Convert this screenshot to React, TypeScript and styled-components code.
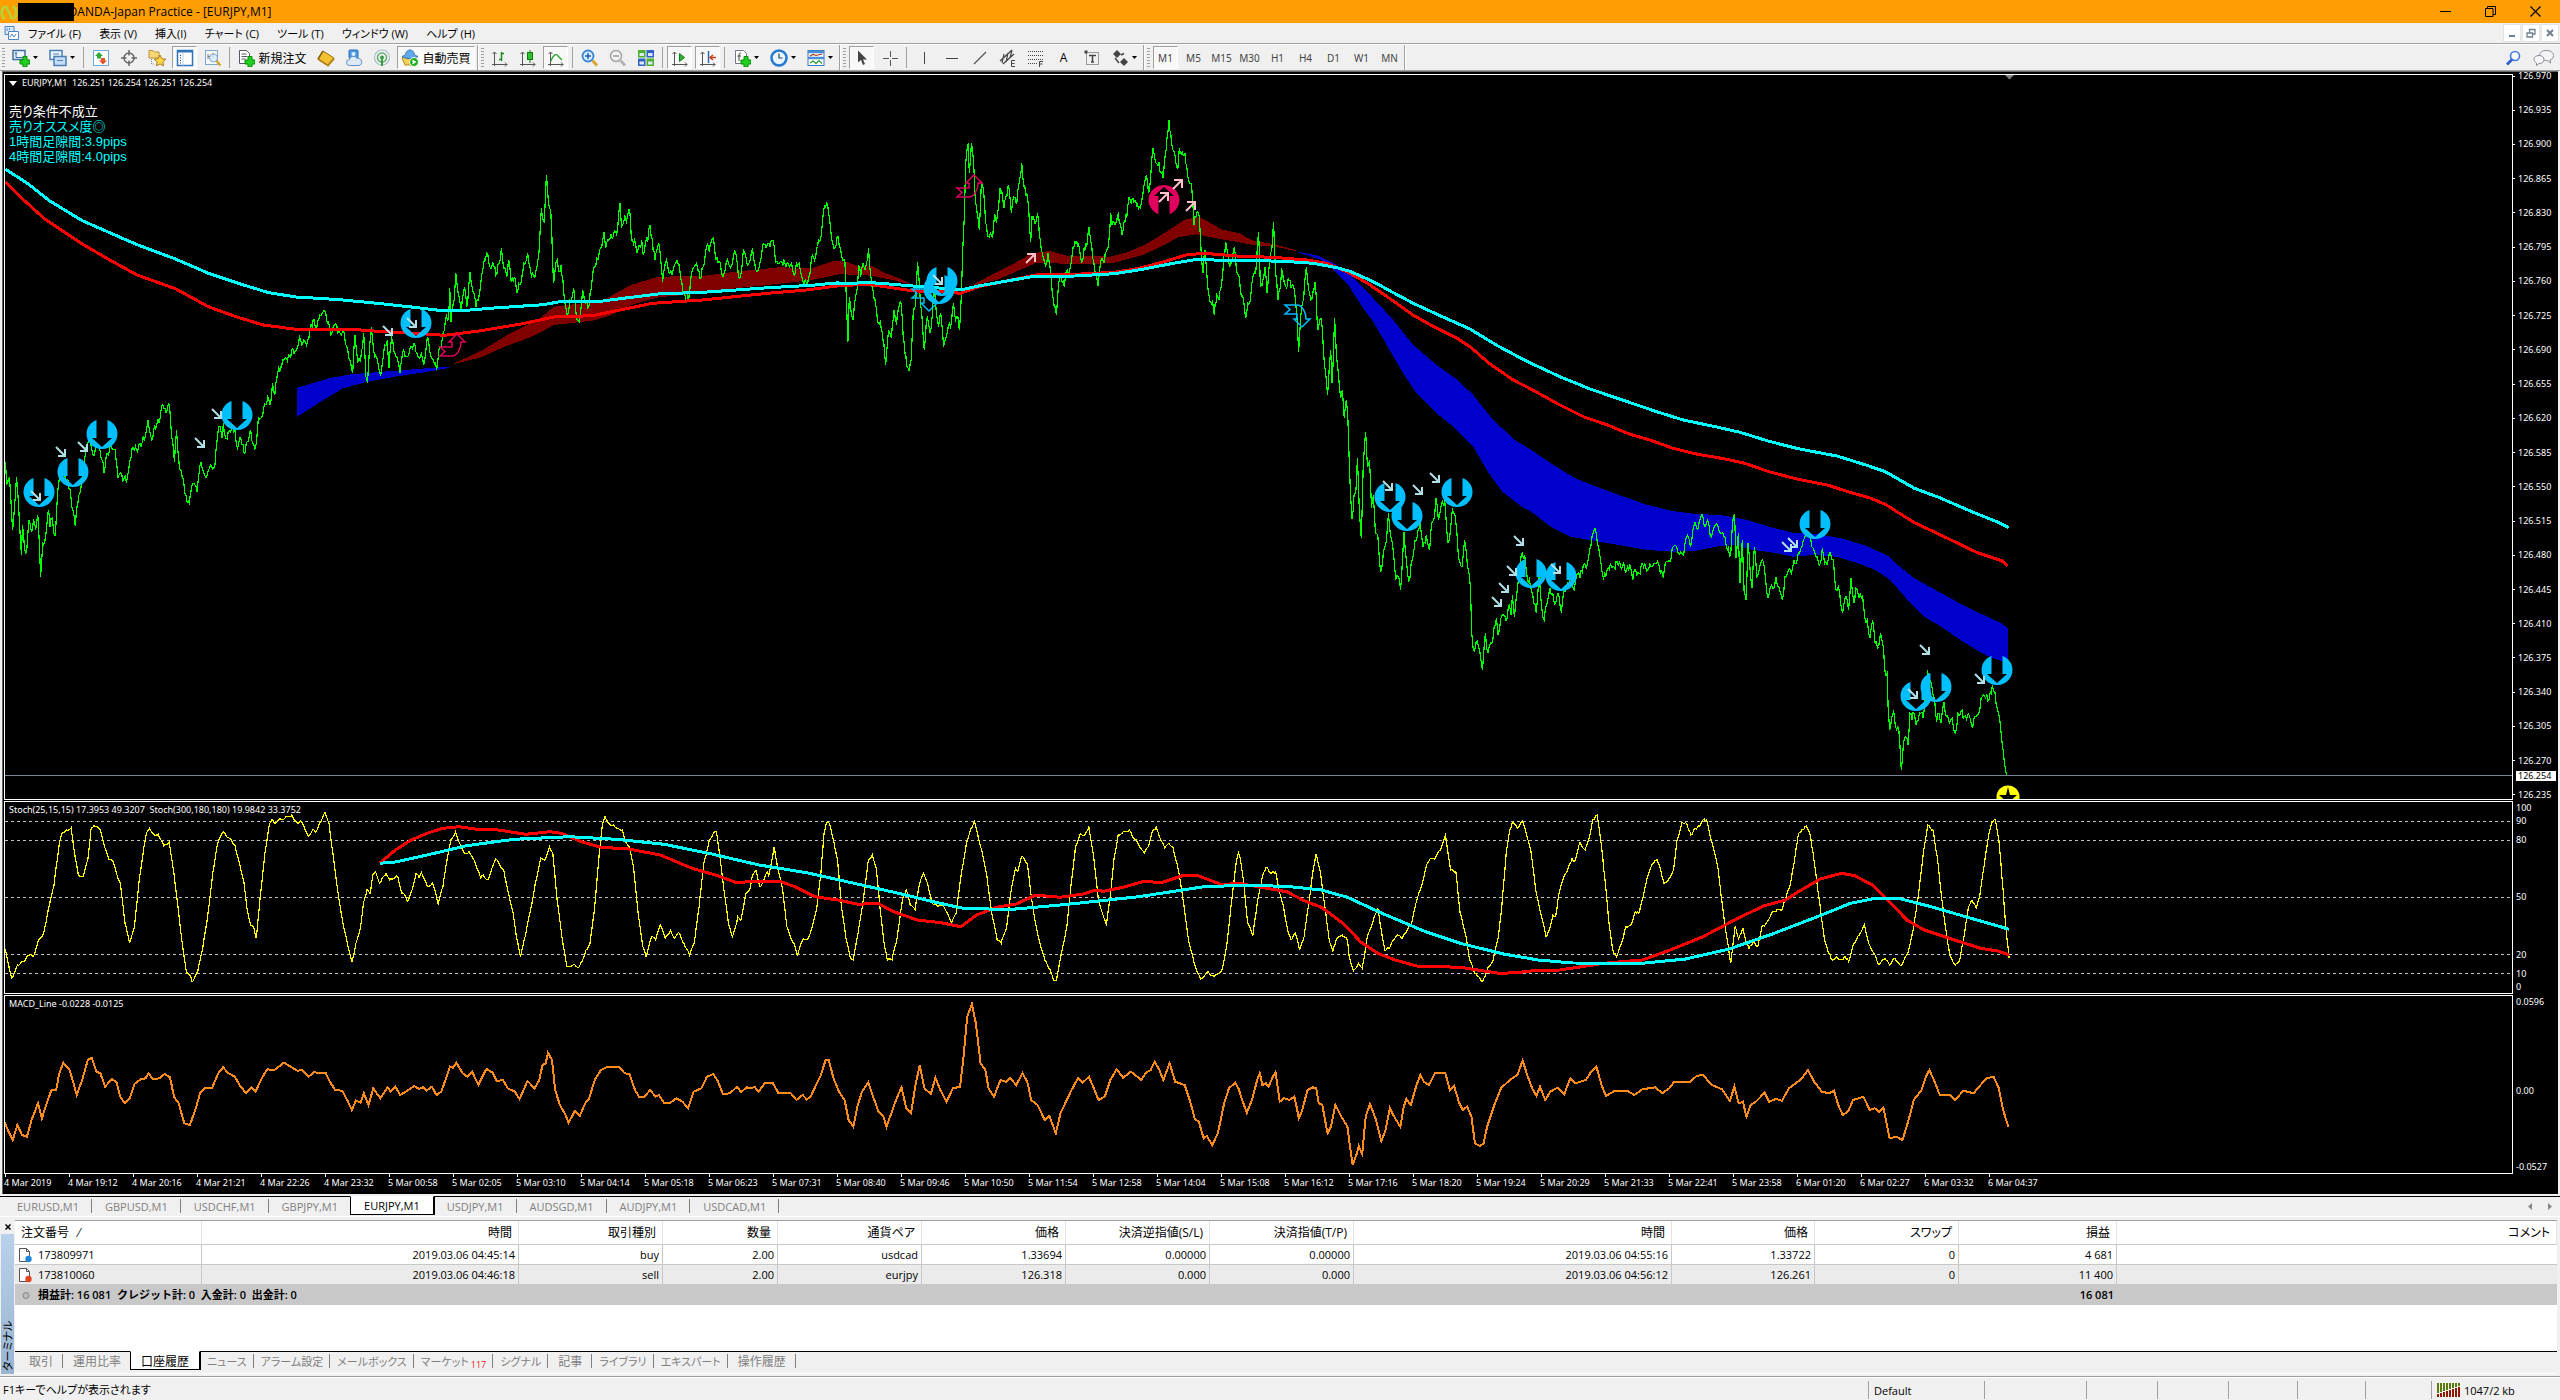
import React from "react";
import styled, { createGlobalStyle, css } from "styled-components";

const UI = `"Open Sans", "Noto Sans CJK JP", sans-serif`;
const CHART = `"Noto Sans", "Noto Sans CJK JP", sans-serif`;

const Global = createGlobalStyle`
  *, *::before, *::after { box-sizing: border-box; }
  html, body { margin: 0; height: 100%; }
  body { background: #f0f0f0; font-family: ${UI}; font-size: 11px; color: #000; overflow: hidden; }
  #root { height: 100%; }
  button { font: inherit; color: inherit; background: none; border: 0; padding: 0; margin: 0; cursor: default; }
  svg { display: block; flex: none; }
`;

/* ---------- series data ---------- */

type Pt = [number, number];

/* Turns a run of samples stored in grid units into chart coordinates. */
const run = (x0: number, y0: number, sx: number, sy: number, data: string): Pt[] =>
  data
    .trim()
    .split(/\s+/)
    .map((p) => {
      const [x, y] = p.split(",").map(Number);
      return [x0 + x / sx, y0 + y / sy] as Pt;
    });

const A = (d: string) => run(0, 160, 1.823, 3, d);
const B = (d: string) => run(800, 100, 2.8, 3, d);
const C = (d: string) => run(1240, 220, 3, 3, d);
const D = (d: string) => run(1260, 380, 2.063, 3, d);
const E = (d: string) => run(0, 780, 1.2645, 3, d);
const F = (d: string) => run(1200, 780, 1.153, 3, d);

const fmt = (pts: Pt[]) => pts.map(([x, y]) => `${x.toFixed(1)},${y.toFixed(1)}`).join(" ");
const band = (up: Pt[], low: Pt[]) => fmt([...up, ...[...low].reverse()]);

/* Fills the gaps between samples with one bar per pixel, each with a small swing. */
const perBar = (pts: Pt[], swing: number): Pt[] =>
  pts.flatMap((p, i) => {
    const next = pts[i + 1];
    if (!next) return [p];
    const steps = Math.max(1, Math.round(next[0] - p[0]));
    return Array.from({ length: steps }, (_, k): Pt => {
      const t = k / steps;
      const x = p[0] + (next[0] - p[0]) * t;
      const off = k === 0 ? 0 : Math.sin(x * 12.9 + i * 7.3) * swing;
      return [x, p[1] + (next[1] - p[1]) * t + off];
    });
  });

const price = fmt(
  perBar(
    [
      ...A(`10,905 12,975 17,950 23,1110 30,950 36,1100 39,1185 41,1095 45,1170 49,1165 53,1080 57,1115 61,1080 65,1110 69,1065 74,1250 78,1150 83,1130 88,1050 91,1100 95,1075 98,1120 101,1125 105,1000 110,950 116,940 122,960 128,990 133,1050 137,1098 142,1030 147,990 152,910 157,860 165,845 172,885 178,855 186,900 190,940 195,880 203,860 210,870 215,955 222,945 230,965 237,900 243,862 249,870 255,850 263,840 270,780 277,840 282,795 290,790 294,745 299,745 303,760 309,735 313,830 318,905 322,810 327,920 332,950 337,1000 345,1030 352,970 359,995 366,905 377,950 386,920 392,915 397,820 401,800 405,835 407,790 412,835 420,815 428,805 433,865 439,835 445,880 451,845 457,810 461,850 466,862 471,770 480,755 488,710 492,735 497,670 501,705 506,640 512,620 515,600 522,595 528,590 532,570 540,570 546,530 552,550 559,555 565,510 571,480 577,510 583,465 592,452 597,490 605,520 612,492 620,520 626,505 632,560 637,600 643,640 647,525 652,610 657,605 663,520 667,650 670,670 677,500 683,590 690,620 694,645 701,555 706,540 709,625 714,535 722,590 729,640 736,570 742,590 748,560 756,550 762,590 768,580 774,610 779,530 783,570 790,600 796,630 800,570 806,540 812,480 818,470 820,385 822,485 828,420 831,340 837,410 841,450 847,380 851,440 857,335 863,400 868,440 876,380 881,320 887,278 893,320 898,305 904,345 910,310 914,265 918,325 924,350 927,300 932,365 938,350 942,400 948,375 955,310 962,280 967,330 973,350 979,320 982,290 985,200 987,145 992,185 996,45 999,110 1004,150 1006,220 1009,370 1013,310 1016,300 1019,335 1023,315 1026,355 1030,430 1034,465 1039,420 1046,385 1050,460 1056,485 1062,390 1068,430 1074,435 1080,350 1084,320 1090,300 1095,265 1101,215 1104,265 1110,240 1118,230 1126,205 1130,130 1133,200 1139,165 1142,185 1148,150 1151,240 1157,240 1162,280 1170,240 1173,285 1178,240 1181,245 1185,195 1191,275 1194,300 1201,250 1208,365 1215,300 1221,340 1227,330 1236,310 1241,355 1246,400 1250,420 1256,415 1261,340 1270,310 1276,355 1282,320 1288,260 1293,275 1300,235 1305,300 1311,305 1317,350 1324,305 1330,320 1337,290 1341,275 1346,345 1350,350 1355,270 1361,305 1368,295 1372,265 1378,330 1384,320 1390,260 1397,265 1404,260 1409,240 1413,290 1418,310 1425,305 1431,310 1437,310 1443,310 1449,345 1452,305 1457,310 1464,365 1470,370 1476,350 1481,285 1487,290 1492,240 1497,225 1503,138 1509,140 1514,205 1520,265 1528,230 1534,285 1540,300 1543,420`),
      ...B(`134,725 138,590 148,660 158,580 165,500 170,530 176,490 182,510 186,490 192,445 197,520 203,570 210,600 217,665 225,665 230,695 237,760 240,795 248,690 256,715 263,630 270,675 276,625 283,610 289,710 294,760 299,800 304,810 311,780 317,640 323,620 329,485 335,570 341,640 348,750 354,660 360,670 364,700 370,650 376,560 382,640 388,680 394,640 402,740 410,710 418,670 424,670 430,610 436,660 442,650 446,690 451,600 456,440 460,350 464,190 471,130 474,220 480,130 486,190 491,310 496,340 502,390 508,245 514,270 520,370 527,410 533,400 539,415 545,345 550,370 556,320 560,265 567,290 571,325 579,290 584,255 592,340 598,290 605,310 612,260 621,190 628,265 635,280 640,320 646,425 650,350 658,370 665,340 670,400 676,450 682,480 687,500 694,460 702,520 707,590 714,620 718,645 724,550 730,520 740,560 748,510 754,515 762,465 768,440 775,425 780,430 785,465 791,485 796,440 803,440 809,380 815,430 822,480 828,520 834,558 840,500 848,480 852,490 857,455 864,430 870,340 874,375 882,375 889,345 896,370 902,405 908,360 915,350 921,290 927,310 935,305 943,320 950,320 958,295 964,250 970,225 976,280 982,230 988,145 992,165 998,190 1005,185 1011,220 1017,235 1022,170 1028,110 1033,60 1038,100 1044,150 1050,165 1058,205 1062,145 1070,155 1078,160 1083,200 1088,240 1096,250 1100,310 1103,375 1112,335 1118,350 1122,430 1128,520 1134,450 1139,520 1145,585 1150,605 1155,600 1160,645 1167,585 1173,600 1178,570 1185,500 1192,425 1197,450 1203,500 1209,490 1216,445 1222,510 1230,530 1236,590 1242,600 1248,655 1254,610 1262,590 1268,530 1276,520 1284,395 1289,560 1296,540 1302,500 1308,580 1315,490 1321,450 1326,365 1332,520 1338,600 1345,560 1349,505 1356,550 1362,565 1369,540 1375,565 1382,560 1388,610 1392,660 1396,755 1402,650 1410,600 1418,500 1424,570 1430,600 1436,575 1443,545 1450,690 1460,655 1466,760 1472,820 1477,885 1482,800 1486,750 1490,850 1497,655 1502,770 1508,830 1514,895`),
      ...D(`170,30 174,115 178,60 181,100 184,240 187,350 190,418 194,345 198,330 201,235 205,400 209,475 213,260 218,155 222,260 226,240 230,385 234,350 238,460 243,465 249,575 255,510 261,480 265,400 270,470 276,530 280,600 285,590 290,630 294,540 297,455 302,540 307,605 314,540 320,480 326,450 330,425 336,500 343,465 350,510 354,430 360,410 363,355 368,420 374,375 381,360 388,490 393,450 397,385 404,425 409,525 417,560 422,480 428,560 434,620 437,760 440,810 446,785 453,810 459,870 465,760 470,820 478,790 485,735 488,715 491,765 497,715 503,705 510,715 514,675 518,705 521,645 525,710 530,640 535,570 541,520 546,525 551,590 558,620 565,670 570,700 576,580 581,680 586,720 592,670 598,625 604,640 610,670 615,640 622,695 628,630 635,610 642,600 648,630 655,580 660,595 667,555 673,565 680,510 685,470 691,445 696,490 703,545 709,595 716,570 723,550 730,560 737,545 744,560 750,545 756,575 763,555 769,600 775,570 782,580 789,550 796,565 804,550 812,550 820,545 826,580 832,595 838,545 846,545 853,500 860,505 868,515 874,525 880,470 888,500 893,450 898,425 904,445 911,405 918,440 923,420 929,470 936,445 944,435 950,460 957,470 964,510 971,525 975,430 979,405 982,535 987,460 990,610 995,480 999,640 1003,660 1007,490 1011,570 1015,625 1020,500 1025,590 1031,560 1037,540 1043,600 1048,655 1053,620 1058,625 1064,590 1070,620 1078,660 1083,590 1090,570 1096,580 1102,540 1108,540 1113,520 1118,500 1126,465 1132,460 1138,500 1144,515 1150,530 1156,550 1160,505 1165,550 1172,540 1178,525 1183,540 1187,620 1193,620 1198,670 1202,700 1208,650 1214,690 1219,595 1225,670 1229,625 1236,655 1243,645 1248,715 1253,720 1258,775 1264,720 1269,790 1274,805 1280,760 1286,800 1289,870 1294,880 1296,990 1299,1050 1303,1010 1307,990 1311,1040 1316,1040 1320,1090 1323,1170 1327,1100 1332,1070 1337,1095 1341,1000 1345,1020 1349,1000 1353,1035 1358,1020 1363,1000 1368,1015 1372,960 1377,870 1382,900 1388,940 1392,960 1396,1025 1401,1000 1405,1030 1411,965 1416,1010 1422,1030 1428,1015 1434,1060 1440,1000 1446,995 1453,1010 1460,1005 1468,1040 1475,1010 1483,1000 1490,950 1497,955 1504,960 1511,915 1516,935 1521,985 1527,1030 1533,1110 1541,1185`),
    ],
    4,
  ),
);

const slowMa = fmt([
  ...A(`10,28 50,70 90,122 150,182 200,218 250,254 320,297 380,340 440,373 490,398 540,411 620,419 700,432 750,441 800,451 850,451 900,444 990,434 1020,425 1095,424 1130,416 1200,402 1290,396 1400,383 1480,376 1530,368`),
  ...B(`80,551 200,548 260,553 340,560 400,565 450,570 500,558 600,539 650,530 770,528 880,521 960,508 1030,493 1100,480 1140,479 1200,482`),
  ...C(`0,121 130,124 220,130 290,143 330,154 400,185 460,218 520,250 600,287 690,327 770,376 860,424 960,470 1050,507 1150,541 1250,575 1330,600 1430,621 1500,637`),
  ...D(`1050,184 1110,206 1190,228 1250,255 1290,275 1350,325 1400,352 1480,402 1520,425 1545,443`),
]);

const fastMa = fmt([
  ...A(`10,65 40,115 80,175 150,252 200,300 250,345 320,386 380,440 430,470 480,495 540,508 640,508 700,515 750,519 810,526 870,514 950,492 1010,471 1080,467 1130,450 1190,430 1280,420 1400,400 1470,390 1530,377`),
  ...B(`100,556 200,554 300,570 350,575 400,575 450,580 500,560 600,538 660,525 750,524 880,517 950,505 1020,485 1080,465 1130,460 1200,466`),
  ...C(`0,109 100,112 200,120 260,130 320,155 380,188 450,236 520,286 590,325 650,354 690,380 750,432 820,480 880,511 950,550 1030,590 1100,614 1170,643 1230,660`),
  ...D(`850,204 900,222 960,237 1000,250 1050,275 1110,298 1170,315 1220,338 1260,355 1290,373 1350,428 1400,462 1480,518 1530,542 1542,557`),
]);

const bands: { color: string; points: string }[] = [
  {
    color: "#0000cd",
    points: band(A(`542,683 600,655 640,643 720,632 818,620`), A(`542,770 580,730 625,685 670,665 720,650 780,635 818,624`)),
  },
  {
    color: "#800000",
    points: band(
      [
        ...A(`828,610 880,570 930,520 980,480 1010,440 1060,430 1100,420 1150,375 1200,350 1280,348 1340,335 1420,322 1480,325 1520,303`),
        ...B(`130,485 160,497 200,497 240,520 290,540 318,557`),
      ],
      [
        ...A(`828,612 880,590 920,560 970,530 1010,495 1080,482 1110,468 1150,435 1200,412 1280,400 1340,385 1400,375 1480,360 1530,343`),
        ...B(`120,523 200,527 260,540 318,557`),
      ],
    ),
  },
  {
    color: "#800000",
    points: band(
      B(`480,557 540,522 600,490 650,460 700,453 750,468 810,468 870,470 920,455 970,432 1030,392 1075,360 1110,350 1130,357 1180,388 1230,400 1270,422 1330,433 1388,450`),
      B(`480,558 550,540 620,508 660,490 700,488 740,492 830,492 880,488 960,465 1010,440 1060,412 1110,403 1150,412 1220,425 1270,436 1330,440 1388,453`),
    ),
  },
  {
    color: "#0000cd",
    points: band(
      [
        ...C(`178,96 235,107 290,135 330,165 400,235 460,300 520,375 590,435 650,478 700,525 760,600 825,660`),
        ...D(`560,210 600,250 650,295 690,318 750,350 800,375 850,393 900,402 950,405 1000,418 1050,440 1100,458 1150,463 1200,475 1250,497 1295,527 1320,560 1350,595 1400,635 1450,675 1500,710 1530,730 1543,745`),
      ],
      [
        ...C(`178,99 240,118 275,145 325,195 370,265 400,305 440,375 490,460 530,520 590,580 640,620 680,660`),
        ...D(`440,200 470,275 500,335 540,380 560,395 600,440 640,470 680,480 740,495 800,510 850,515 900,512 940,500 980,495 1010,508 1060,518 1100,530 1140,525 1190,530 1230,548 1270,570 1300,600 1330,650 1370,710 1400,735 1450,785 1500,828 1543,850`),
      ],
    ),
  },
];

const stoch = fmt(
  perBar(
    [
      ...E(`6,505 15,595 22,555 30,545 37,525 42,530 50,475 55,460 62,380 68,320 75,190 79,158 84,150 90,143 95,230 99,285 105,290 111,240 115,150 119,137 127,148 132,200 138,240 143,245 148,285 152,310 158,430 164,490 170,440 176,300 182,200 186,155 189,145 194,162 200,163 207,198 214,185 220,280 226,400 231,500 236,580 240,585 243,605 250,575 256,510 263,400 269,280 275,190 282,156 290,175 297,195 303,250 308,300 312,380 317,435 321,445 324,475 330,330 335,220 340,140 344,118 347,130 352,120 360,115 369,105 376,130 380,122 385,145 390,168 396,148 399,157 404,130 411,97 416,130 421,220 427,330 433,420 440,500 445,547 450,490 456,440 460,365 464,330 468,340 472,280 475,275 480,310 488,280 493,300 500,290 503,290 508,340 512,345 515,365 521,330 526,280 530,293 533,277 537,300 541,320 547,308 551,340 554,372 560,320 566,230 570,180 576,155 581,190 588,220 593,215 598,235 604,270 608,295 611,285 617,300 622,265 627,237 632,255 637,270 642,330 649,400 653,470 658,530 664,470 670,400 678,300 684,235 689,240 695,200 699,220 704,350 711,480 717,560 722,560 727,555 732,562 736,545 741,510 746,490 752,380 757,240 762,130 765,110 770,130 776,135 781,145 787,150 790,180 796,200 801,260 807,400 813,500 817,530 824,470 829,480 835,435 841,475 848,450 853,475 858,458 865,490 872,525 878,490 884,380 890,250 897,180 902,160 906,155 911,240 916,340 921,430 926,470 930,440 933,410 937,420 943,340 948,330 951,290 956,272 961,320 966,300 970,275 972,290 979,200 984,270 989,320 995,440 1000,475 1004,490 1008,525 1015,480 1022,475 1027,440 1033,380 1038,280 1042,160 1046,125 1049,130 1054,180 1059,240 1064,380 1070,480 1075,530 1079,540 1085,460 1091,370 1098,240 1103,225 1108,265 1113,390 1118,490 1122,540 1128,540 1133,490 1137,430 1142,350 1146,330 1151,375 1157,390 1163,310 1168,280 1173,310 1179,370 1186,380 1192,375 1198,400 1203,430 1209,400 1215,290 1222,190 1228,145 1232,125 1236,160 1243,230 1248,290 1254,400 1261,480 1266,490 1273,440 1278,340 1284,265 1287,275 1292,230 1299,250 1303,330 1308,410 1314,480 1321,540 1328,570 1332,600 1336,600 1342,520 1349,440 1354,320 1360,200 1366,160 1371,165 1377,140 1383,230 1389,360 1399,433 1404,350 1409,230 1414,165 1419,160 1428,150 1432,170 1438,185 1447,220 1452,200 1458,150 1462,142 1468,180 1473,205 1478,190 1483,200 1490,270 1496,360 1503,480 1510,550 1518,598 1527,575 1535,590 1545,570 1551,500 1557,370 1563,250 1566,217`),
      ...F(`46,230 50,300 55,430 61,465 66,370 72,290 76,262 82,280 87,275 92,340 96,375 101,450 105,480 110,460 115,510 120,470 126,360 131,260 134,222 139,280 145,400 149,480 153,515 157,480 164,465 170,480 172,530 177,572 183,550 187,565 193,470 200,420 205,385 209,450 213,510 218,505 223,480 228,465 233,475 238,455 244,430 248,380 255,320 262,250 266,235 270,238 277,210 283,165 289,270 295,275 300,400 306,460 311,540 317,580 321,590 326,605 331,570 338,540 344,470 348,380 353,220 357,150 361,125 366,145 372,123 376,160 382,220 387,330 392,390 399,470 403,450 407,405 410,410 414,340 419,295 424,270 429,235 432,245 438,187 444,210 449,170 453,120 458,105 462,180 467,300 472,440 476,510 480,530 486,490 491,440 497,435 502,395 506,400 511,350 516,290 522,250 527,240 530,260 535,310 540,300 546,270 550,180 556,127 561,130 566,165 571,145 576,140 580,120 584,120 590,185 597,260 601,350 606,450 612,550 617,440 621,475 626,445 630,490 633,505 638,485 643,500 648,440 653,430 659,400 665,390 671,390 676,350 681,310 686,230 690,160 695,148 699,138 703,160 707,220 711,300 716,400 720,480 725,520 729,540 734,530 739,540 744,530 748,545 754,490 760,465 766,433 771,490 777,520 783,555 790,535 795,555 801,535 809,557 816,520 823,440 829,330 834,220 839,135 845,150 850,230 855,350 860,450 865,530 871,555 876,540 882,450 886,380 890,360 895,385 899,350 905,240 909,170 913,125 917,120 921,180 926,330 929,440 933,535`),
    ],
    1,
  ),
);

const stochRed = fmt([
  ...E(`480,250 500,210 520,180 540,160 560,145 580,140 600,147 630,150 665,163 695,155 710,160 735,185 760,202 795,207 835,225 875,265 905,285 930,307 985,303 1005,320 1030,350 1060,360 1085,373 1110,370 1130,395 1160,420 1190,428 1215,440 1235,405 1260,382 1285,372 1310,345 1340,352 1370,342 1385,330 1395,334 1420,322 1445,305 1470,307 1495,287 1515,287 1545,314`),
  ...F(`45,310 70,322 100,335 120,362 140,382 165,430 185,485 205,520 225,540 250,558 300,562 320,570 345,580 365,578 385,572 415,570 440,560 465,550 510,540 540,512 580,470 620,415 650,378 675,360 690,335 715,297 740,280 755,287 775,315 795,365 815,420 835,450 870,480 900,505 920,513 933,525`),
]);

const stochCyan = fmt([
  ...E(`480,250 500,246 540,225 590,197 650,178 720,170 780,178 840,193 900,222 960,255 1020,278 1080,310 1140,342 1180,365 1220,386 1280,388 1350,373 1440,350 1520,321`),
  ...F(`46,316 100,319 140,330 170,352 210,400 260,455 300,490 350,522 390,540 430,549 510,550 560,537 610,507 660,462 710,412 750,370 775,357 805,355 840,378 880,408 933,448`),
]);

const macd = fmt([
  ...E(`6,1028 10,1050 16,1080 22,1035 28,1065 34,1070 40,1020 48,970 53,1015 59,970 65,930 71,930 75,880 80,848 88,870 93,910 97,945 104,900 111,840 116,833 122,875 127,880 133,920 141,897 147,905 152,950 158,970 164,955 170,912 178,898 184,895 188,880 193,897 202,895 208,882 215,892 220,950 226,970 233,1030 240,1035 247,990 253,940 259,925 268,925 276,880 282,862 289,880 297,890 303,915 311,940 318,922 323,935 332,890 338,868 347,870 359,848 366,858 376,872 382,870 390,890 397,877 412,880 417,905 424,930 433,932 440,965 445,990 450,962 456,968 460,940 466,975 472,925 481,955 490,922 494,935 500,920 506,945 515,932 524,918 530,927 535,922 539,932 546,920 552,945 558,935 564,895 569,860 573,863 577,848 585,880 591,890 597,875 605,915 611,885 615,867 623,878 628,903 636,900 642,925 651,935 657,957 663,925 667,903 676,925 682,900 686,855 690,850 693,818 698,840 702,930 708,975 714,1000 719,1028 727,993 733,1008 740,970 745,955 752,900 760,870 768,860 783,862 790,880 796,882 803,930 808,950 815,950 822,930 829,950 833,945 840,970 848,968 855,955 863,965 870,985 877,935 887,925 894,890 902,882 908,905 914,942 923,940 932,920 937,937 944,922 950,925 954,920 959,935 967,910 977,908 984,938 1000,940 1007,960 1015,945 1020,958 1025,950 1032,915 1038,885 1044,840 1048,840 1054,895 1061,935 1068,960 1073,1020 1079,1040 1084,980 1090,935 1098,907 1104,950 1111,995 1117,1010 1121,1040 1127,1000 1133,960 1140,922 1146,985 1152,1000 1158,910 1163,857 1169,925 1177,942 1183,893 1189,930 1197,965 1205,925 1214,920 1218,840 1223,710 1229,673 1234,730 1240,850 1246,870 1250,925 1257,950 1265,900 1272,905 1277,893 1285,915 1293,880 1299,905 1304,960 1312,975 1321,1020 1327,1008 1335,1060 1341,1000 1349,960 1355,930 1363,895 1369,908 1377,890 1384,930 1389,960 1397,950 1404,900 1412,868 1420,893 1430,875 1438,890 1443,900 1449,878 1455,870 1460,845 1466,870 1471,900 1479,850 1486,905 1498,915 1505,965 1511,1018 1516,1025 1522,1075 1526,1068 1533,1095 1540,1060 1548,970 1554,925 1562,908 1567,930`),
  ...F(`46,940 50,970 54,998 60,960 66,900 69,880 72,915 76,910 79,920 84,890 87,877 92,965 97,955 103,960 109,950 114,1015 118,990 124,930 130,922 134,925 137,970 141,975 147,1060 151,1040 156,975 163,1010 170,1040 173,1100 176,1155 181,1120 183,1098 187,1122 191,1010 196,972 203,1020 209,1083 214,1050 219,985 225,1015 231,1040 235,980 238,957 243,975 249,920 254,885 258,905 264,915 271,880 279,878 283,880 288,930 293,918 299,970 303,990 308,980 313,1010 317,1090 323,1098 327,1090 331,1040 340,970 347,925 353,910 360,895 366,885 372,842 378,890 383,925 388,948 392,920 398,960 404,935 412,923 420,942 427,895 433,910 445,900 451,875 457,860 463,915 468,948 478,933 493,933 501,945 510,928 525,922 533,940 541,925 547,905 565,905 573,887 580,885 590,915 602,928 611,963 616,920 621,970 626,965 630,1010 635,975 641,965 651,938 656,965 664,957 671,962 679,925 687,910 694,895 701,870 708,905 717,935 725,940 731,932 736,975 741,1005 747,995 753,960 765,950 772,990 778,985 783,995 788,983 795,1075 803,1070 810,1080 817,1020 823,960 832,930 837,890 841,870 847,905 853,945 865,945 871,960 880,932 892,940 900,915 907,895 915,890 921,925 926,990 932,1040`),
]);

const sellBadges: Pt[] = [
  [39, 492], [73, 472], [102, 434], [237, 415], [416, 323], [939, 289], [942, 281], [1390, 497], [1407, 516],
  [1457, 492], [1531, 573], [1561, 576], [1815, 524], [1916, 696], [1936, 687], [1997, 670],
];
const sellTicks: Pt[] = [
  [36, 496], [61, 452], [83, 447], [200, 443], [217, 414], [388, 331], [412, 323], [938, 280], [1388, 486],
  [1418, 490], [1435, 478], [1519, 541], [1512, 571], [1504, 588], [1497, 602], [1556, 569], [1787, 547],
  [1793, 543], [1913, 694], [1925, 650], [1980, 679],
];
const buyTicks: Pt[] = [[1031, 258], [1164, 197], [1178, 184], [1191, 206]];

const priceScale = Array.from({ length: 22 }, (_, i) => (126.97 - i * 0.035).toFixed(3));
const times = `4 Mar 2019|4 Mar 19:12|4 Mar 20:16|4 Mar 21:21|4 Mar 22:26|4 Mar 23:32|5 Mar 00:58|5 Mar 02:05|5 Mar 03:10|5 Mar 04:14|5 Mar 05:18|5 Mar 06:23|5 Mar 07:31|5 Mar 08:40|5 Mar 09:46|5 Mar 10:50|5 Mar 11:54|5 Mar 12:58|5 Mar 14:04|5 Mar 15:08|5 Mar 16:12|5 Mar 17:16|5 Mar 18:20|5 Mar 19:24|5 Mar 20:29|5 Mar 21:33|5 Mar 22:41|5 Mar 23:58|6 Mar 01:20|6 Mar 02:27|6 Mar 03:32|6 Mar 04:37`.split("|");

/* ---------- window frame ---------- */

const Window = styled.div`
  display: flex;
  flex-direction: column;
  height: 100vh;
  min-height: 700px;
  background: #f0f0f0;
`;

const TitleBar = styled.header`
  display: flex;
  align-items: center;
  height: 23px;
  flex: none;
  background: #ff9e02;
  padding-right: 2px;
`;
const Redaction = styled.span`
  position: relative;
  z-index: 1;
  width: 56px;
  height: 18px;
  background: #000;
`;
const Title = styled.h1`
  margin: 0 auto 0 -6px;
  font-size: 12px;
  font-weight: 400;
  white-space: nowrap;
`;
const CaptionButton = styled.button`
  width: 45px;
  height: 21px;
  display: grid;
  place-items: center;
`;

const MenuBar = styled.nav`
  display: flex;
  align-items: center;
  height: 21px;
  flex: none;
  padding: 0 1px 0 4px;
  border-bottom: 1px solid #a0a0a0;
`;
const MenuItem = styled.button`
  height: 20px;
  padding: 0 9px;
  white-space: nowrap;
  font-size: 11px;
  font-feature-settings: "palt";
`;
const Spacer = styled.div`
  flex: 1;
`;
const MdiButton = styled.button`
  width: 18px;
  height: 18px;
  margin-left: 1px;
  border: 1px solid #e3e3e3;
  background: #fff;
  display: grid;
  place-items: center;
`;

const Toolbar = styled.div`
  display: flex;
  align-items: stretch;
  height: 27px;
  flex: none;
  border-top: 1px solid #fff;
  border-bottom: 1px solid #a0a0a0;
`;
const Group = styled.div`
  display: flex;
  align-items: center;
  gap: 3px;
  padding: 0 2px;
  border-right: 1px solid #a0a0a0;
  box-shadow: 1px 0 0 #fff;
  margin-right: 1px;
`;
const Grip = styled.span`
  width: 3px;
  height: 20px;
  background: repeating-linear-gradient(#a0a0a0 0 1px, transparent 1px 3px);
`;
const Sep = styled.span`
  width: 1px;
  height: 21px;
  margin: 0 1px;
  background: #a0a0a0;
`;
const Tool = styled.button<{ $on?: boolean; $w?: number }>`
  width: ${(p) => p.$w ?? 25}px;
  height: 23px;
  display: flex;
  align-items: center;
  justify-content: center;
  gap: 3px;
  border: 1px solid transparent;
  font-size: 12px;
  white-space: nowrap;
  ${(p) =>
    p.$on &&
    css`
      background: #f8f8f8;
      border-color: #a0a0a0 #fff #fff #a0a0a0;
    `}
`;
const DropTool = styled.button`
  width: 34px;
  height: 23px;
  display: flex;
  align-items: center;
  gap: 3px;
  padding-left: 4px;
`;
const Period = styled(Tool)`
  font-family: ${CHART};
  font-size: 10px;
  color: #444;
`;
const ToolEnd = styled.div`
  display: flex;
  align-items: center;
  gap: 12px;
  margin-left: auto;
  padding-right: 5px;
`;

/* ---------- chart ---------- */

const ChartWindow = styled.main`
  flex: 1;
  min-height: 0;
  display: flex;
  flex-direction: column;
  margin: 0 2px 2px;
  padding: 2px 0 0 1px;
  border-left: 1px solid #696969;
  border-top: 1px solid #696969;
  background: #000;
  color: #fff;
  font-family: ${CHART};
  font-size: 9px;
`;
const Plots = styled.div`
  flex: 1;
  min-height: 0;
  display: grid;
  grid-template-columns: minmax(0, 1fr) 45px;
  grid-template-rows: minmax(0, 726fr) minmax(0, 193fr) minmax(0, 179fr);
  row-gap: 1px;
`;
const Panel = styled.section`
  position: relative;
  border: 1px solid #fff;
  min-width: 0;
  min-height: 0;
  overflow: hidden;
`;
const Plot = styled.svg.attrs({ preserveAspectRatio: "none" })`
  width: 100%;
  height: 100%;
`;
const PanelLabel = styled.div`
  position: absolute;
  top: 2px;
  left: 4px;
  line-height: 12px;
  white-space: pre;
  display: flex;
  align-items: center;
  gap: 5px;
`;
const Notes = styled.div`
  position: absolute;
  top: 29px;
  left: 4px;
  font: 13px/15px "Liberation Sans", "Noto Sans CJK JP", sans-serif;
  font-feature-settings: "palt";
  color: #00ffff;
`;
const NoteLine = styled.p<{ $plain?: boolean }>`
  margin: 0;
  color: ${(p) => (p.$plain ? "#fff" : "inherit")};
`;
const Scale = styled.div`
  position: relative;
  line-height: 12px;
  min-height: 0;
`;
const PriceAxis = styled(Scale)`
  display: flex;
  flex-direction: column;
  justify-content: space-between;
  margin: -4px 0 -1px;
`;
const PriceTick = styled.span`
  display: flex;
  align-items: center;
  gap: 3px;
  &::before {
    content: "";
    width: 2px;
    height: 1px;
    background: #fff;
  }
`;
const LastPrice = styled.span`
  position: absolute;
  left: 3px;
  right: 2px;
  height: 10px;
  line-height: 10px;
  padding-left: 2px;
  background: #fff;
  color: #000;
`;
const StochAxis = styled(Scale)`
  display: grid;
  grid-template-rows: 13fr 19fr 57fr 57fr 19fr 13fr 12fr;
  padding: 1px 0 1px 3px;
`;
const MacdAxis = styled(Scale)`
  display: grid;
  grid-template-rows: 88fr 76fr 12fr;
  padding: 1px 0 1px 3px;
`;
const TimeAxis = styled.div`
  display: flex;
  height: 20px;
  flex: none;
  overflow: hidden;
`;
const TimeTick = styled.span`
  width: 64px;
  flex: none;
  white-space: nowrap;
  line-height: 12px;
  &::before {
    content: "";
    display: block;
    width: 1px;
    height: 3px;
    margin-left: 1px;
    background: #fff;
  }
`;

/* ---------- tabs ---------- */

const TabStrip = styled.div<{ $h: number }>`
  display: flex;
  height: ${(p) => p.$h}px;
  flex: none;
  padding-left: 4px;
  border-top: 1px solid #000;
  border-bottom: 1px solid #fff;
`;
const Tab = styled.button<{ $on?: boolean; $pad: number; $size?: number }>`
  position: relative;
  height: 18px;
  padding: 0 ${(p) => p.$pad}px;
  font-size: ${(p) => p.$size ?? 11}px;
  color: #808080;
  white-space: nowrap;
  font-feature-settings: "palt";
  display: flex;
  align-items: center;
  &::after {
    content: "";
    position: absolute;
    right: 0;
    top: 2px;
    bottom: 2px;
    width: 1px;
    background: #808080;
  }
  ${(p) =>
    p.$on &&
    css`
      color: #000;
      background: #fff;
      margin: -1px 0 0 -1px;
      height: 19px;
      border: 1px solid #000;
      border-top-color: #fff;
      box-shadow: 1px 0 0 #000;
      &::after {
        display: none;
      }
    `}
`;
const Count = styled.sub`
  align-self: flex-end;
  margin-left: 2px;
  font-size: 9px;
  line-height: 10px;
  color: #f02020;
`;
const Scrollers = styled.div`
  display: flex;
  align-items: center;
  gap: 14px;
  margin-left: auto;
  padding-right: 8px;
`;

/* ---------- terminal ---------- */

const Terminal = styled.section`
  display: flex;
  height: 154px;
  flex: none;
  margin-top: 3px;
`;
const Side = styled.aside`
  width: 15px;
  flex: none;
  display: flex;
  flex-direction: column;
`;
const CloseSide = styled.button`
  height: 14px;
  display: grid;
  place-items: center;
`;
const SideCaption = styled.div`
  flex: 1;
  margin-left: 1px;
  width: 13px;
  background: linear-gradient(#99b4d1, #b9d1ea);
  writing-mode: vertical-rl;
  text-orientation: sideways;
  transform: rotate(180deg);
  font-size: 11px;
  line-height: 13px;
  padding-top: 3px;
  font-feature-settings: "palt";
`;
const TerminalBody = styled.div`
  flex: 1;
  min-width: 0;
  display: flex;
  flex-direction: column;
  margin-right: 3px;
`;
const Sheet = styled.div`
  flex: 1;
  min-height: 0;
  background: #fff;
  border-top: 1px solid #a0a0a0;
`;
const Grid = styled.table`
  width: 100%;
  table-layout: fixed;
  border-collapse: separate;
  border-spacing: 0;
`;
const HeadCell = styled.th<{ $left?: boolean }>`
  height: 24px;
  padding: 0 6px;
  font-size: 12px;
  font-weight: 400;
  line-height: 16px;
  font-feature-settings: "palt";
  text-align: ${(p) => (p.$left ? "left" : "right")};
  border-right: 1px solid #e5e5e5;
  border-bottom: 1px solid #c8c8c8;
  white-space: nowrap;
`;
const Row = styled.tr<{ $shade?: boolean }>`
  background: ${(p) => (p.$shade ? "#ebebeb" : "#fff")};
`;
const Cell = styled.td<{ $left?: boolean }>`
  height: 20px;
  padding: 0 3px;
  line-height: 16px;
  text-align: ${(p) => (p.$left ? "left" : "right")};
  border-right: 1px solid #c8c8c8;
  border-bottom: 1px solid #c8c8c8;
  white-space: nowrap;
  &:last-child {
    border-right: 0;
  }
`;
const Ticket = styled.span`
  display: flex;
  align-items: center;
  gap: 6px;
`;
const TotalCell = styled.td<{ $left?: boolean }>`
  height: 20px;
  padding: 0 3px;
  background: #c8c8c8;
  font-weight: 600;
  line-height: 16px;
  text-align: ${(p) => (p.$left ? "left" : "right")};
  white-space: pre;
`;

const StatusBar = styled.footer`
  display: flex;
  align-items: stretch;
  height: 24px;
  flex: none;
  margin-top: 2px;
  border-top: 1px solid #a0a0a0;
  box-shadow: inset 0 1px 0 #fff;
  padding: 4px 0 1px 3px;
`;
const StatusText = styled.span`
  flex: 1;
  line-height: 17px;
  font-feature-settings: "palt";
`;
const StatusCell = styled.span<{ $w: number }>`
  width: ${(p) => p.$w}px;
  display: flex;
  align-items: center;
  gap: 4px;
  padding-left: 5px;
  border-left: 1px solid #a0a0a0;
`;

/* ---------- icons ---------- */

const Ico = ({ children, w = 18, h = 18 }: { children: React.ReactNode; w?: number; h?: number }) => (
  <svg width={w} height={h} viewBox={`0 0 ${w} ${h}`} fill="none" aria-hidden="true">
    {children}
  </svg>
);
const Caret = () => (
  <svg width="5" height="3" viewBox="0 0 5 3" aria-hidden="true">
    <path d="M0 0h5L2.5 3z" fill="#000" />
  </svg>
);
const plus = <path d="M11 7.500h4v3.500h3v4h-3V18h-4v-3H8v-4h3z" fill="#1fd01f" stroke="#0b8a0b" />;
const lens = (
  <>
    <path d="M11.500 11.500L16 16.500" stroke="#d9a52b" strokeWidth="3" />
    <circle cx="7" cy="7" r="5.500" fill="#dbeeff" stroke="#3a86d8" strokeWidth="1.800" />
  </>
);
const axes = <path d="M3.500 3v14M1.500 5l2-2 2 2M1 15.500H16M14 13.500l2 2-2 2" stroke="#555" />;

const icons = {
  newChart: (
    <Ico>
      <rect x="1" y="1.500" width="12" height="9" fill="#eaf3fc" stroke="#3f6f9f" strokeWidth="1.500" />
      <path d="M4 3.500v5h7M3 5l1-1.500L5 5" stroke="#3f6f9f" />
      {plus}
    </Ico>
  ),
  profiles: (
    <Ico>
      <rect x="1" y="1.500" width="12" height="9" fill="#eef6ff" stroke="#4a7fb4" strokeWidth="1.500" />
      <rect x="5" y="7.500" width="12" height="9" fill="#c4dcf5" stroke="#4a7fb4" strokeWidth="1.500" />
      <path d="M4 5h6M8 11.500h6" stroke="#4a7fb4" />
    </Ico>
  ),
  market: (
    <Ico>
      <rect x="1.500" y="1.500" width="15" height="15" fill="#fff" stroke="#6fa8dc" />
      <path d="M7 3l4 4H9v2.500H5V7H3z" fill="#35a83a" />
      <path d="M11 15.500l-4-4h2V9h4v2.500h2z" fill="#e2562b" />
    </Ico>
  ),
  target: (
    <Ico>
      <circle cx="9" cy="9" r="5" stroke="#666" strokeWidth="1.500" />
      <path d="M9 1v5.500M9 11.500V17M1 9h5.500M11.500 9H17" stroke="#666" strokeWidth="1.500" />
    </Ico>
  ),
  favorites: (
    <Ico>
      <path d="M1 3V1.500h4L6.500 3H11v6H1z" fill="#f7d774" stroke="#b8903a" />
      <path d="M3.500 10v5h3" stroke="#888" strokeDasharray="1 1" />
      <path d="M12 6l1.800 3.700 4 .5-3 2.700.8 4-3.600-2-3.600 2 .8-4-3-2.700 4-.5z" fill="#ffd94a" stroke="#b07a16" />
    </Ico>
  ),
  navigator: (
    <Ico>
      <rect x="1.500" y="1.500" width="15" height="15" fill="#fff" stroke="#2f74bc" strokeWidth="1.500" />
      <path d="M1 2.500h16" stroke="#2f74bc" strokeWidth="2" />
      <path d="M4 6.500h1M4 9h1M4 11.500h1M4 14h1" stroke="#333" strokeWidth="1.200" />
      <path d="M7 4v12.500" stroke="#b9d3ee" />
    </Ico>
  ),
  tester: (
    <Ico>
      <rect x="1.500" y="1.500" width="12" height="14" fill="#f4f8fc" stroke="#7fa6cc" />
      <path d="M4 10V5M4 7.500h3M9 4v5" stroke="#777" />
      <circle cx="9.500" cy="9" r="4" fill="#d7eaff" fillOpacity=".8" stroke="#8ab" />
      <path d="M12.500 12l4 4.500" stroke="#d9a52b" strokeWidth="2.500" />
    </Ico>
  ),
  order: (
    <Ico>
      <path d="M2.500 1.500h7l3 3v10h-10z" fill="#fff" stroke="#556" />
      <path d="M4.500 5h5M4.500 7.500h6M4.500 10h4" stroke="#556" />
      {plus}
    </Ico>
  ),
  book: (
    <Ico>
      <path d="M6 2l11 7-6 7.500L1 10z" fill="#f2c230" stroke="#9a6c10" />
      <path d="M1 10l10 6.500 6-7" stroke="#b5851b" strokeWidth="2" />
      <path d="M6 2l-5 8" stroke="#8a5f12" strokeWidth="1.500" />
    </Ico>
  ),
  cloud: (
    <Ico>
      <rect x="4" y="1" width="9" height="8" rx="1" fill="#4d9ae6" stroke="#2b6cb5" />
      <circle cx="8.500" cy="5" r="2" fill="#e3f1ff" />
      <path d="M4.500 16.500a3 3 0 010-6 4 4 0 017.500-1 3.500 3.500 0 012 7z" fill="#dceaf8" stroke="#5f8fc4" />
    </Ico>
  ),
  signal: (
    <Ico>
      <circle cx="9" cy="8.500" r="7.500" stroke="#a9bfd0" strokeWidth="1.200" />
      <circle cx="9" cy="8.500" r="4.500" stroke="#5fae6a" strokeWidth="1.500" />
      <circle cx="9" cy="8.500" r="2" fill="#3f9a4a" />
      <path d="M9 9v8" stroke="#3f9a4a" strokeWidth="2" />
    </Ico>
  ),
  auto: (
    <Ico>
      <path d="M1 9c2-2 13-2 15 0l-3 7H4z" fill="#f4d050" stroke="#b28a1e" />
      <path d="M1 7.500c2-1 3-1 3.500-2C5 2.500 7 1 9 1s4 1.500 4.500 4.500c.5 1 1.500 1 3.500 2-4 3-12 3-16 0z" fill="#62a8e8" stroke="#2f74b8" />
      <circle cx="13" cy="13" r="4.500" fill="#1fb01f" stroke="#fff" />
      <path d="M11.500 10.500l4 2.500-4 2.500z" fill="#fff" />
    </Ico>
  ),
  bars: (
    <Ico>
      {axes}
      <path d="M10.500 3v9M8 10.500h2.500M10.500 4.500H13" stroke="#1c8c1c" strokeWidth="1.500" />
    </Ico>
  ),
  candles: (
    <Ico>
      {axes}
      <path d="M11 1v13" stroke="#117a11" />
      <rect x="8.500" y="3.500" width="5" height="7" fill="#2ec22e" stroke="#117a11" />
    </Ico>
  ),
  line: (
    <Ico>
      {axes}
      <path d="M4 12c2-6 5-8 7-5l4 4" stroke="#2ba32b" strokeWidth="1.300" />
    </Ico>
  ),
  zoomIn: (
    <Ico>
      {lens}
      <path d="M7 4v6M4 7h6" stroke="#1f5fb5" strokeWidth="1.500" />
    </Ico>
  ),
  zoomOut: (
    <Ico>
      <circle cx="7" cy="7" r="5.500" fill="#f3f3f3" stroke="#a5a5a5" strokeWidth="1.500" />
      <path d="M11.500 11.500L16 16.500" stroke="#b5b5b5" strokeWidth="3" />
      <path d="M4 7h6" stroke="#999" strokeWidth="1.500" />
    </Ico>
  ),
  tile: (
    <Ico>
      <path d="M1 1h7.500v7.500H1zM9.500 9.500H17V17H9.500z" fill="#4caf2e" />
      <path d="M9.500 1H17v7.500H9.500zM1 9.500h7.500V17H1z" fill="#2f62c4" />
      <path d="M2.500 4h4.500v3H2.500zM11 4h4.500v3H11zM2.500 12.500h4.500v3H2.500zM11 12.500h4.500v3H11z" fill="#dfe9f5" />
    </Ico>
  ),
  scroll: (
    <Ico>
      {axes}
      <path d="M8.500 4.500l5 4-5 4z" fill="#2db52d" stroke="#167a16" />
    </Ico>
  ),
  shift: (
    <Ico>
      {axes}
      <path d="M9.500 2v12" stroke="#2a6ab0" strokeWidth="1.500" />
      <path d="M17 8.500h-5M14 6l-3 2.500 3 2.500" stroke="#c8401c" strokeWidth="1.500" />
    </Ico>
  ),
  indicators: (
    <Ico>
      <path d="M2.500 1.500h8l3 3v10h-11z" fill="#fff" stroke="#778" />
      <path d="M8 4c-2 0-2 1-2 3v5M4.500 7h3.500" stroke="#444" />
      {plus}
    </Ico>
  ),
  clock: (
    <Ico>
      <circle cx="9" cy="9" r="7.500" fill="#e8f4ff" stroke="#2478cf" strokeWidth="2.500" />
      <path d="M9 4.500V9h3.500" stroke="#345" strokeWidth="1.200" />
    </Ico>
  ),
  template: (
    <Ico>
      <rect x="1" y="1.500" width="16" height="15" fill="#fff" stroke="#3a78b8" />
      <path d="M1 3h16M1 9h16" stroke="#4a8fd6" strokeWidth="2.500" />
      <path d="M3 7l3-1.500 3 1L15 5" stroke="#a33a1e" strokeWidth="1.200" />
      <path d="M3 14l3-2 3 2.500 3-3 3 3" stroke="#2a9a2a" strokeWidth="1.200" />
    </Ico>
  ),
  cursor: (
    <Ico>
      <path d="M5 1.500v12l3-2.500 2 5 2-1-2-4.500h4z" fill="#444" />
    </Ico>
  ),
  cross: (
    <Ico>
      <path d="M9.500 2v6M9.500 11V17M2 9.500h6M11 9.500H17" stroke="#555" />
    </Ico>
  ),
  vline: (
    <Ico>
      <path d="M9.500 3v12" stroke="#444" />
    </Ico>
  ),
  hline: (
    <Ico>
      <path d="M3 9.500h12" stroke="#444" />
    </Ico>
  ),
  trend: (
    <Ico>
      <path d="M3 15L15 3" stroke="#555" strokeWidth="1.300" />
    </Ico>
  ),
  channel: (
    <Ico>
      <path d="M1 12L13 1M4 15L15 5M3 14l2-9M7 13l2-9M11 9l2-8" stroke="#444" strokeWidth="1.200" />
      <path d="M16 11.500h-3.500v6H16M12.500 14.500h3" stroke="#444" />
    </Ico>
  ),
  fibo: (
    <Ico>
      <path d="M1 2.500h15M1 6.500h15M1 10.500h15M1 14.500h10" stroke="#444" strokeDasharray="1 1" />
      <path d="M16 12.500h-3.500V18M12.500 15h3" stroke="#444" />
    </Ico>
  ),
  label: (
    <Ico>
      <rect x="3.500" y="3.500" width="12" height="12" stroke="#444" strokeDasharray="1 1" />
      <path d="M6 6.500h7M9.500 6.500V13M8 13h3" stroke="#444" strokeWidth="1.500" />
      <rect x="1.500" y="1.500" width="3" height="3" fill="#444" />
    </Ico>
  ),
  arrows: (
    <Ico>
      <path d="M6 1l4 4-4 4-4-4zM13 9l4 4-4 4-4-4z" fill="#444" />
      <path d="M4 9l4 5M10 6l3-1.500" stroke="#444" strokeWidth="1.500" />
    </Ico>
  ),
};

const BADGE = "M-5.500 -14V4H-10L0 13L10 4H5.500V-14A15.500 15 0 1 1 -5.500 -14Z";
const CURVED = "M0 13H12V8H9L17 0L25 8H21C21 15 17 22 12 22H0L5 17.500Z";

const DocIcon = ({ color }: { color: string }) => (
  <Ico w={14} h={16}>
    <path d="M1.500 1.500h7l3 3v10h-10z" fill="#fff" stroke="#555" />
    <path d="M8.500 1.500v3h3" stroke="#555" />
    <circle cx="10.500" cy="12" r="3.200" fill={color} />
  </Ico>
);

/* ---------- sections ---------- */

const menu = ["ファイル (F)", "表示 (V)", "挿入(I)", "チャート (C)", "ツール (T)", "ウィンドウ (W)", "ヘルプ (H)"];
const symbols = ["EURUSD", "GBPUSD", "USDCHF", "GBPJPY", "EURJPY", "USDJPY", "AUDSGD", "AUDJPY", "USDCAD"];
const terminalTabs = ["取引", "運用比率", "口座履歴", "ニュース", "アラーム設定", "メールボックス", "マーケット", "シグナル", "記事", "ライブラリ", "エキスパート", "操作履歴"];
const startsWithKana = (t: string) => /^[ァ-ヶ]/.test(t);
const periods = ["M1", "M5", "M15", "M30", "H1", "H4", "D1", "W1", "MN"];
const columns = [187, 317, 144, 115, 144, 144, 144, 144, 318, 143, 144, 158];
const heads = ["時間", "取引種別", "数量", "通貨ペア", "価格", "決済逆指値(S/L)", "決済指値(T/P)", "時間", "価格", "スワップ", "損益", "コメント"];
const orders = [
  { id: "173809971", color: "#1c86d8", cells: ["2019.03.06 04:45:14", "buy", "2.00", "usdcad", "1.33694", "0.00000", "0.00000", "2019.03.06 04:55:16", "1.33722", "0", "4 681", ""] },
  { id: "173810060", color: "#e2431e", cells: ["2019.03.06 04:46:18", "sell", "2.00", "eurjpy", "126.318", "0.000", "0.000", "2019.03.06 04:56:12", "126.261", "0", "11 400", ""] },
];

const Tools = ({ names, on = [] }: { names: (keyof typeof icons)[]; on?: string[] }) => (
  <>
    {names.map((n) => (
      <Tool key={n} aria-label={n} $on={on.includes(n)}>
        {icons[n]}
      </Tool>
    ))}
  </>
);
const Drops = ({ names }: { names: (keyof typeof icons)[] }) => (
  <>
    {names.map((n) => (
      <DropTool key={n} aria-label={n}>
        {icons[n]}
        <Caret />
      </DropTool>
    ))}
  </>
);

const MainPlot = () => (
  <Plot viewBox="5 75 2507 724">
    <path d="M2005 75h9l-4.500 4.500z" fill="#808080" />
    {bands.map((b, i) => (
      <polygon key={i} points={b.points} fill={b.color} shapeRendering="crispEdges" />
    ))}
    <path d="M5 775.500H2512" stroke="#778899" />
    <g fill="none" shapeRendering="crispEdges">
      <polyline points={price} stroke="#00ff00" strokeWidth="1.200" />
      <polyline points={fastMa} stroke="#ff0000" strokeWidth="3" />
      <polyline points={slowMa} stroke="#00ffff" strokeWidth="3" />
    </g>
    {sellBadges.map(([x, y], i) => (
      <path key={i} transform={`translate(${x} ${y})`} d={BADGE} fill="#00bfff" />
    ))}
    <g fill="none" strokeWidth="1.500">
      <path transform="translate(440 334)" d={CURVED} stroke="#e0005e" />
      <path transform="translate(957 175)" d={CURVED} stroke="#e0005e" />
      <path transform="translate(912 311) scale(1 -1)" d={CURVED} stroke="#00bfff" />
      <path transform="translate(1285 327) scale(1 -1)" d={CURVED} stroke="#00bfff" />
    </g>
    <path transform="translate(1164 200) scale(1 -1)" d={BADGE} fill="#e0005e" />
    <g fill="none" stroke="#b0e0e6" strokeWidth="2">
      {sellTicks.map(([x, y], i) => (
        <path key={i} d={`M${x - 5} ${y - 5}l9 9M${x + 4} ${y - 3}v7h-7`} />
      ))}
    </g>
    <g fill="none" stroke="#ffc0cb" strokeWidth="2">
      {buyTicks.map(([x, y], i) => (
        <path key={i} d={`M${x - 5} ${y + 5}l9 -9M${x + 4} ${y + 4}v-8h-8`} />
      ))}
    </g>
    <circle cx="2008" cy="797" r="11.500" fill="#ffff00" />
    <path d="M2008 787l2 8h7l-9 8-9-8h7z" fill="#000" />
  </Plot>
);

export default function App() {
  return (
    <>
      <Global />
      <Window>
        <TitleBar>
          <Ico>
            <path d="M5 3a8 8 0 000 13M6 3l6 13M13 3a8 8 0 010 13" stroke="#b5d334" strokeWidth="2.500" />
          </Ico>
          <Redaction />
          <Title>OANDA-Japan Practice - [EURJPY,M1]</Title>
          <CaptionButton aria-label="最小化">
            <Ico w={11} h={11}><path d="M0 5.500h11" stroke="#000" /></Ico>
          </CaptionButton>
          <CaptionButton aria-label="元に戻す">
            <Ico w={11} h={11}><path d="M.5 2.500h7.500v8H.5zM2.500 2.500v-2h8v8H8" stroke="#000" /></Ico>
          </CaptionButton>
          <CaptionButton aria-label="閉じる">
            <Ico w={11} h={11}><path d="M.5.5l10 10M10.500.5l-10 10" stroke="#000" strokeWidth="1.200" /></Ico>
          </CaptionButton>
        </TitleBar>

        <MenuBar>
          <Ico w={15} h={16}>
            <path d="M1 1.500h9v8H1z" fill="#dbe9f8" stroke="#4a86c8" />
            <path d="M4.500 6.500h10v8h-10z" fill="#fff" stroke="#4a86c8" />
            <path d="M6 12l2-3 2 3 2-3M3 3v3M5.500 3v2" stroke="#4a86c8" />
          </Ico>
          {menu.map((m) => (
            <MenuItem key={m}>{m}</MenuItem>
          ))}
          <Spacer />
          <MdiButton aria-label="最小化">
            <Ico w={10} h={10}><path d="M2 8h6" stroke="#708090" strokeWidth="2" /></Ico>
          </MdiButton>
          <MdiButton aria-label="元に戻す">
            <Ico w={10} h={10}><path d="M1 5h5.500v4H1zM3.500 4.500V1.500H9V6H7" stroke="#708090" strokeWidth="1.300" /></Ico>
          </MdiButton>
          <MdiButton aria-label="閉じる">
            <Ico w={10} h={10}><path d="M2 2l6 6M8 2L2 8" stroke="#708090" strokeWidth="2" /></Ico>
          </MdiButton>
        </MenuBar>

        <Toolbar>
          <Group>
            <Grip />
            <Drops names={["newChart", "profiles"]} />
            <Sep />
            <Tools names={["market", "target", "favorites", "navigator", "tester"]} on={["navigator"]} />
            <Sep />
            <Tool $w={76}>{icons.order}新規注文</Tool>
            <Tools names={["book", "cloud", "signal"]} />
            <Tool $w={78} $on>{icons.auto}自動売買</Tool>
          </Group>
          <Group>
            <Grip />
            <Tools names={["bars", "candles", "line"]} on={["line"]} />
            <Sep />
            <Tools names={["zoomIn", "zoomOut", "tile"]} />
            <Sep />
            <Tools names={["scroll", "shift"]} on={["scroll", "shift"]} />
            <Sep />
            <Drops names={["indicators", "clock", "template"]} />
          </Group>
          <Group>
            <Grip />
            <Tools names={["cursor", "cross"]} on={["cursor"]} />
            <Sep />
            <Tools names={["vline", "hline", "trend", "channel", "fibo"]} />
            <Tool>A</Tool>
            <Tools names={["label"]} />
            <Drops names={["arrows"]} />
          </Group>
          <Group>
            <Grip />
            {periods.map((p) => (
              <Period key={p} $on={p === "M1"}>{p}</Period>
            ))}
          </Group>
          <ToolEnd>
            <Ico w={16} h={16}>
              <circle cx="10" cy="6" r="4.500" fill="#fff" stroke="#4a7fe0" strokeWidth="1.700" />
              <path d="M7 9.500L2 14.500" stroke="#2f62c8" strokeWidth="2.800" />
            </Ico>
            <Ico w={22} h={18}>
              <path d="M13.500 1.500c4 0 7 2 7 5s-2 4-3.500 4.500l.5 3-3-2.500c-5 .5-8-2-8-5s3-5 7-5z" fill="#f4f4f8" stroke="#8a8a94" />
              <path d="M6 6.500c3 0 5 1.500 5 4s-2 4-5 4l-2.500 2v-2.500C2 13.500 1 12 1 10.500c0-2.500 2-4 5-4z" fill="#f8f8fc" stroke="#8a8a94" />
            </Ico>
          </ToolEnd>
        </Toolbar>

        <ChartWindow>
          <Plots>
            <Panel>
              <MainPlot />
              <PanelLabel>
                <svg width="8" height="5" viewBox="0 0 8 5"><path d="M0 0h8L4 5z" fill="#fff" /></svg>
                {"EURJPY,M1  126.251 126.254 126.251 126.254"}
              </PanelLabel>
              <Notes>
                <NoteLine $plain>売り条件不成立</NoteLine>
                <NoteLine>売りオススメ度◎</NoteLine>
                <NoteLine>1時間足隙間:3.9pips</NoteLine>
                <NoteLine>4時間足隙間:4.0pips</NoteLine>
              </Notes>
            </Panel>
            <PriceAxis>
              {priceScale.map((p) => (
                <PriceTick key={p}>{p}</PriceTick>
              ))}
              <LastPrice style={{ top: `${((126.97 - 126.254) / 0.741) * 99.2}%` }}>126.254</LastPrice>
            </PriceAxis>

            <Panel>
              <Plot viewBox="5 802 2507 191">
                <g stroke="#c0c0c0" strokeDasharray="3 3" shapeRendering="crispEdges">
                  {[821.5, 840.5, 897.5, 954.5, 973.5].map((y) => (
                    <path key={y} d={`M5 ${y}H2512`} />
                  ))}
                </g>
                <g fill="none" shapeRendering="crispEdges">
                  <polyline points={stoch} stroke="#ffff00" strokeWidth="1.200" />
                  <polyline points={stochRed} stroke="#ff0000" strokeWidth="3" />
                  <polyline points={stochCyan} stroke="#00ffff" strokeWidth="3" />
                </g>
              </Plot>
              <PanelLabel>{"Stoch(25,15,15) 17.3953 49.3207  Stoch(300,180,180) 19.9842 33.3752"}</PanelLabel>
            </Panel>
            <StochAxis>
              {[100, 90, 80, 50, 20, 10, 0].map((v) => (
                <span key={v}>{v}</span>
              ))}
            </StochAxis>

            <Panel>
              <Plot viewBox="5 996 2507 177">
                <polyline points={macd} fill="none" stroke="#ff8c1a" strokeWidth="2" shapeRendering="crispEdges" />
              </Plot>
              <PanelLabel>MACD_Line -0.0228 -0.0125</PanelLabel>
            </Panel>
            <MacdAxis>
              <span>0.0596</span>
              <span>0.00</span>
              <span>-0.0527</span>
            </MacdAxis>
          </Plots>
          <TimeAxis>
            {times.map((t) => (
              <TimeTick key={t}>{t}</TimeTick>
            ))}
          </TimeAxis>
        </ChartWindow>

        <TabStrip $h={21}>
          {symbols.map((s) => (
            <Tab key={s} $pad={13} $on={s === "EURJPY"}>{s},M1</Tab>
          ))}
          <Scrollers>
            <button aria-label="左へ"><Ico w={5} h={7}><path d="M4 0v7L0 3.500z" fill="#888" /></Ico></button>
            <button aria-label="右へ"><Ico w={5} h={7}><path d="M1 0v7l4-3.500z" fill="#888" /></Ico></button>
          </Scrollers>
        </TabStrip>

        <Terminal>
          <Side>
            <CloseSide aria-label="閉じる">
              <Ico w={6} h={6}><path d="M.5.5l5 5M5.500.5l-5 5" stroke="#000" strokeWidth="1.500" /></Ico>
            </CloseSide>
            <SideCaption>ターミナル</SideCaption>
          </Side>
          <TerminalBody>
            <Sheet>
              <Grid>
                <colgroup>
                  {columns.map((w, i) => (
                    <col key={i} width={w} />
                  ))}
                  <col />
                </colgroup>
                <thead>
                  <tr>
                    <HeadCell $left>注文番号 &nbsp; ⁄</HeadCell>
                    {heads.map((h, i) => (
                      <HeadCell key={i}>{h}</HeadCell>
                    ))}
                  </tr>
                </thead>
                <tbody>
                  {orders.map((o, r) => (
                    <Row key={o.id} $shade={r === 1}>
                      <Cell $left>
                        <Ticket>
                          <DocIcon color={o.color} />
                          {o.id}
                        </Ticket>
                      </Cell>
                      {o.cells.map((c, i) => (
                        <Cell key={i}>{c}</Cell>
                      ))}
                    </Row>
                  ))}
                  <tr>
                    <TotalCell $left colSpan={11}>
                      <Ticket>
                        <Ico w={14} h={14}><circle cx="8" cy="7.500" r="3" fill="#bbb" stroke="#888" /></Ico>
                        {"損益計: 16 081  クレジット計: 0  入金計: 0  出金計: 0"}
                      </Ticket>
                    </TotalCell>
                    <TotalCell>16 081</TotalCell>
                    <TotalCell />
                  </tr>
                </tbody>
              </Grid>
            </Sheet>
            <TabStrip $h={23}>
              {terminalTabs.map((t) => (
                <Tab
                  key={t}
                  $pad={startsWithKana(t) ? 7 : 10}
                  $size={startsWithKana(t) ? 11 : 12}
                  $on={t === "口座履歴"}
                >
                  {t}
                  {t === "マーケット" && <Count>117</Count>}
                </Tab>
              ))}
            </TabStrip>
          </TerminalBody>
        </Terminal>

        <StatusBar>
          <StatusText>F1キーでヘルプが表示されます</StatusText>
          <StatusCell $w={116}>Default</StatusCell>
          {[102, 71, 71, 69, 68, 66].map((w, i) => (
            <StatusCell key={i} $w={w} />
          ))}
          <StatusCell $w={129}>
            <Ico w={23} h={14}>
              <path d="M1 0v10M4 0v9M7 0v8M10 0v7M13 0v6M16 0v5M19 0v4M22 0v3" stroke="#5a7a10" strokeWidth="2" />
              <path d="M1 14v-3M4 14v-4M7 14V9M10 14V8M13 14V7M16 14V6M19 14V5M22 14V4" stroke="#8b1a00" strokeWidth="2" />
            </Ico>
            1047/2 kb
          </StatusCell>
        </StatusBar>
      </Window>
    </>
  );
}
